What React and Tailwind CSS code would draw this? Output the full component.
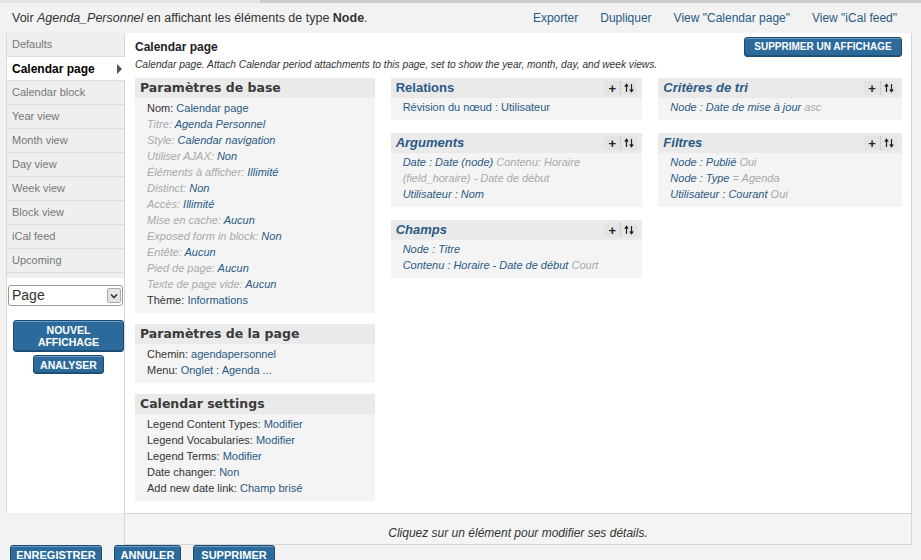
import React from 'react';

const LINK = 'text-[#2a5a85]';
const GREY = 'text-[#a9a9a9]';

const tabs = [
  'Defaults',
  'Calendar page',
  'Calendar block',
  'Year view',
  'Month view',
  'Day view',
  'Week view',
  'Block view',
  'iCal feed',
  'Upcoming',
];

function Btn({ children, className = '' }) {
  return (
    <span
      className={`inline-flex items-center justify-center rounded-[3px] border border-[#1d4a70] bg-[#2c6a9b] text-white font-bold uppercase leading-[12px] text-center shadow-[inset_0_1px_0_#6c9cc4,inset_0_-1px_0_#1f527c] ${className}`}
    >
      {children}
    </span>
  );
}

function Tools() {
  return (
    <span className="flex items-center h-[14px] text-[#222]">
      <span className="w-[16px] h-[14px] flex items-center justify-center bg-[#e4e4e4] text-[13px] font-bold leading-none">+</span>
      <span className="w-[17px] h-[14px] flex items-center justify-center bg-[#e4e4e4] border-l border-dotted border-[#bbb]">
        <svg width="10" height="10" viewBox="0 0 10 10">
          <path d="M2.5 9V2M0.8 3.6L2.5 1.2L4.2 3.6" stroke="#222" strokeWidth="1.2" fill="none" />
          <path d="M7.5 1V8M5.8 6.4L7.5 8.8L9.2 6.4" stroke="#222" strokeWidth="1.2" fill="none" />
        </svg>
      </span>
    </span>
  );
}

function Panel({ title, blue, italic, tools, children }) {
  return (
    <div className="bg-[#f4f4f4]">
      <div className="h-[20px] bg-[#eaeaea] px-[5px] flex items-center justify-between">
        {blue ? (
          <span className={`text-[13px] font-bold text-[#2a5a85] ${italic ? 'italic' : ''}`}>{title}</span>
        ) : (
          <span className="text-[12.5px] font-bold text-[#3a3a3a] font-['DejaVu_Sans',Verdana,sans-serif]">{title}</span>
        )}
        {tools && <Tools />}
      </div>
      <div
        className={`${blue ? 'pt-[1px] pb-[5px]' : 'pt-[2px] pb-[5px]'} pl-[12px] pr-[8px] text-[11px] leading-[16px]`}
      >
        {children}
      </div>
    </div>
  );
}

function Row({ label, value, it }) {
  return (
    <div>
      <span className={it ? `italic ${GREY}` : 'text-[#333]'}>{label}: </span>
      <span className={`${LINK} ${it ? 'italic' : ''}`}>{value}</span>
    </div>
  );
}

function Item({ main, extra }) {
  return (
    <div className="italic">
      <span className={LINK}>{main}</span>
      {extra && <span className={GREY}> {extra}</span>}
    </div>
  );
}

export default function App() {
  return (
    <div className="w-[921px] h-[560px] overflow-hidden bg-[#f2f2f2] text-[#333] font-['Liberation_Sans',Arial,sans-serif]">
      <div className="h-[3px] flex">
        <div className="w-[260px] bg-[#e4e4e4]" />
        <div className="flex-1 bg-[#cdcdcd]" />
      </div>

      <div className="h-[30px] flex items-center justify-between pl-[12px] pr-[24px]">
        <div className="text-[12.5px]">
          Voir <em>Agenda_Personnel</em> en affichant les éléments de type <strong>Node</strong>.
        </div>
        <div className={`flex gap-[22px] text-[12px] ${LINK}`}>
          <span>Exporter</span>
          <span>Dupliquer</span>
          <span>View "Calendar page"</span>
          <span>View "iCal feed"</span>
        </div>
      </div>

      <div className="ml-[6px] w-[906px] flex items-start">
        <div className="w-[118px] h-[480px] bg-white border-l border-[#dadada] flex flex-col">
          {tabs.map((t) =>
            t === 'Calendar page' ? (
              <div
                key={t}
                className="relative z-10 -mr-px h-[24px] bg-white border-b border-[#dedede] pl-[5px] pr-[3px] flex items-center justify-between text-[12px] font-bold text-black"
              >
                <span>{t}</span>
                <span className="w-0 h-0 border-y-[5px] border-y-transparent border-l-[5px] border-l-[#555]" />
              </div>
            ) : (
              <div
                key={t}
                className="h-[24px] bg-[#efefef] border-b border-[#dedede] pl-[5px] flex items-center text-[11px] text-[#777]"
              >
                {t}
              </div>
            )
          )}
          <div className="h-[5px] bg-[#efefef]" />
          <div className="mt-[7px] mx-[1px] h-[21px] border border-[#9a9a9a] rounded-[3px] bg-white flex items-center justify-between pl-[3px] pr-[1px]">
            <span className="text-[14px] text-[#333]">Page</span>
            <span className="w-[14px] h-[15px] border border-[#a9a9a9] rounded-[2px] bg-[#e4e4e4] flex items-center justify-center">
              <svg width="8" height="6" viewBox="0 0 8 6">
                <path d="M1 1.5L4 4.5L7 1.5" stroke="#333" strokeWidth="1.6" fill="none" />
              </svg>
            </span>
          </div>
          <div className="mt-[14px] ml-[6px] w-[111px] flex flex-col items-center gap-[3px]">
            <Btn className="w-[111px] h-[32px] text-[10.5px]">
              Nouvel
              <br />
              Affichage
            </Btn>
            <Btn className="w-[71px] h-[19px] text-[10.5px]">Analyser</Btn>
          </div>
        </div>

        <div className="w-[788px] border-x border-[#d6d6d6]">
          <div className="h-[480px] bg-white pt-[4px] pl-[10px] pr-[9px]">
            <div className="h-[20px] flex items-center justify-between">
              <span className="text-[12px] font-bold text-[#222]">Calendar page</span>
              <Btn className="w-[158px] h-[20px] text-[10px]">Supprimer un affichage</Btn>
            </div>
            <div className="mt-[2px] text-[10.2px] leading-[12px] italic text-[#333]">
              Calendar page. Attach Calendar period attachments to this page, set to show the year, month, day, and week views.
            </div>

            <div className="mt-[7px] flex items-start gap-[16px]">
              <div className="w-[240px] flex flex-col gap-[11px]">
                <Panel title="Paramètres de base">
                  <Row label="Nom" value="Calendar page" />
                  <Row it label="Titre" value="Agenda Personnel" />
                  <Row it label="Style" value="Calendar navigation" />
                  <Row it label="Utiliser AJAX" value="Non" />
                  <Row it label="Éléments à afficher" value="Illimité" />
                  <Row it label="Distinct" value="Non" />
                  <Row it label="Accès" value="Illimité" />
                  <Row it label="Mise en cache" value="Aucun" />
                  <Row it label="Exposed form in block" value="Non" />
                  <Row it label="Entête" value="Aucun" />
                  <Row it label="Pied de page" value="Aucun" />
                  <Row it label="Texte de page vide" value="Aucun" />
                  <Row label="Thème" value="Informations" />
                </Panel>
                <Panel title="Paramètres de la page">
                  <Row label="Chemin" value="agendapersonnel" />
                  <Row label="Menu" value="Onglet : Agenda ..." />
                </Panel>
                <Panel title="Calendar settings">
                  <Row label="Legend Content Types" value="Modifier" />
                  <Row label="Legend Vocabularies" value="Modifier" />
                  <Row label="Legend Terms" value="Modifier" />
                  <Row label="Date changer" value="Non" />
                  <Row label="Add new date link" value="Champ brisé" />
                </Panel>
              </div>

              <div className="w-[252px] flex flex-col gap-[13px]">
                <Panel title="Relations" blue tools>
                  <div className={LINK}>Révision du nœud : Utilisateur</div>
                </Panel>
                <Panel title="Arguments" blue italic tools>
                  <Item main="Date : Date (node)" extra="Contenu: Horaire (field_horaire) - Date de début" />
                  <Item main="Utilisateur : Nom" />
                </Panel>
                <Panel title="Champs" blue italic tools>
                  <Item main="Node : Titre" />
                  <Item main="Contenu : Horaire - Date de début" extra="Court" />
                </Panel>
              </div>

              <div className="w-[244px] flex flex-col gap-[13px]">
                <Panel title="Critères de tri" blue italic tools>
                  <Item main="Node : Date de mise à jour" extra="asc" />
                </Panel>
                <Panel title="Filtres" blue italic tools>
                  <Item main="Node : Publié" extra="Oui" />
                  <Item main="Node : Type" extra="= Agenda" />
                  <Item main="Utilisateur : Courant" extra="Oui" />
                </Panel>
              </div>
            </div>
          </div>
          <div className="h-[32px] bg-[#f4f4f4] border-y border-[#d6d6d6] flex items-end justify-center pb-[2px] text-[12px] italic text-[#333]">
            Cliquez sur un élément pour modifier ses détails.
          </div>
        </div>
      </div>

      <div className="ml-[10px] flex gap-[12px]">
        <Btn className="w-[92px] h-[20px] text-[11px]">Enregistrer</Btn>
        <Btn className="w-[67px] h-[20px] text-[11px]">Annuler</Btn>
        <Btn className="w-[82px] h-[20px] text-[11px]">Supprimer</Btn>
      </div>
    </div>
  );
}
